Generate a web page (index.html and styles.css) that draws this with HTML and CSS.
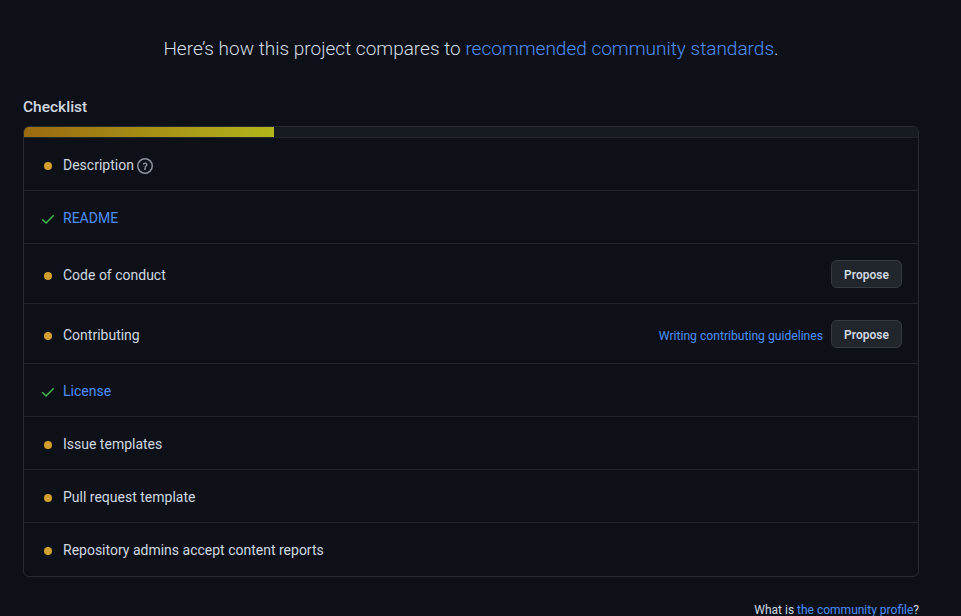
FILE: index.html
```html
<!DOCTYPE html>
<html lang="en">
<head>
<meta charset="utf-8">
<title>Community Standards</title>
<link rel="stylesheet" href="styles.css">
</head>
<body>
<main class="page">
  <h2 class="lead">Here’s how this project compares to <a href="#">recommended community standards</a>.</h2>
  <h3 class="title">Checklist</h3>
  <section class="box">
    <div class="progress"><div class="progress-fill" style="width:28%"></div></div>
    <ul class="list">
      <li class="row"><span class="dot"></span><span>Description</span>
        <svg class="help" width="16" height="16" viewBox="0 0 16 16" fill="#8b949e"><path d="M8 1.5a6.5 6.5 0 1 0 0 13 6.5 6.5 0 0 0 0-13ZM0 8a8 8 0 1 1 16 0A8 8 0 0 1 0 8Zm6.32-2.9A2.5 2.5 0 0 1 10.5 6.75c0 .8-.4 1.3-.93 1.67-.3.2-.57.38-.57.83a.75.75 0 0 1-1.5 0c0-1.1.7-1.65 1.2-2 .33-.22.3-.3.3-.5a1 1 0 0 0-1.65-.76.75.75 0 1 1-1.03-.89ZM8 12a1 1 0 1 0 0-2 1 1 0 0 0 0 2Z"/></svg>
      </li>
      <li class="row"><svg class="check" width="16" height="16" viewBox="0 0 16 16" fill="#3fb950"><path d="M13.78 4.22a.75.75 0 0 1 0 1.06l-7.25 7.25a.75.75 0 0 1-1.06 0L2.22 9.28a.75.75 0 1 1 1.06-1.06L6 10.94l6.72-6.72a.75.75 0 0 1 1.06 0Z"/></svg><a href="#">README</a></li>
      <li class="row row-action"><span class="dot"></span><span>Code of conduct</span><div class="actions"><button class="btn">Propose</button></div></li>
      <li class="row row-action"><span class="dot"></span><span>Contributing</span><div class="actions"><a class="small-link" href="#">Writing contributing guidelines</a><button class="btn">Propose</button></div></li>
      <li class="row"><svg class="check" width="16" height="16" viewBox="0 0 16 16" fill="#3fb950"><path d="M13.78 4.22a.75.75 0 0 1 0 1.06l-7.25 7.25a.75.75 0 0 1-1.06 0L2.22 9.28a.75.75 0 1 1 1.06-1.06L6 10.94l6.72-6.72a.75.75 0 0 1 1.06 0Z"/></svg><a href="#">License</a></li>
      <li class="row"><span class="dot"></span><span>Issue templates</span></li>
      <li class="row"><span class="dot"></span><span>Pull request template</span></li>
      <li class="row"><span class="dot"></span><span>Repository admins accept content reports</span></li>
    </ul>
  </section>
  <p class="foot">What is <a href="#">the community profile</a>?</p>
</main>
</body>
</html>
```
FILE: styles.css
```css
html, body { margin: 0; padding: 0; background: #0d1117; overflow: hidden; }
body { color: #d0d8e0; font-family: Roboto, "Noto Sans", sans-serif; font-size: 14px; }
a { color: #4d8ef7; text-decoration: none; }
.page { width: 896px; margin-left: 23px; }
.lead { margin: 0; padding-top: 35px; text-align: center; font-size: 19px; line-height: 27px; font-weight: 300; color: #d4dce4; }
.title { margin: 0; padding-top: 34px; font-size: 15.5px; line-height: 22px; font-weight: 500; }
.box { margin-top: 8px; height: 451px; box-sizing: border-box; border: 1px solid #262b32; border-radius: 6px; overflow: hidden; }
.progress { height: 10px; background: #161b22; }
.progress-fill { height: 100%; background: linear-gradient(90deg, #9a6a10, #b2b51b); }
.list { list-style: none; margin: 0; padding: 0; border-top: 1px solid #21262d; }
.row { display: flex; align-items: center; box-sizing: border-box; height: 53px; padding: 2px 16px 0; border-top: 1px solid #21262d; }
.row:first-child { height: 52px; border-top: 0; }
.row-action { height: 60px; }
.dot { width: 8px; height: 8px; border-radius: 50%; background: #d29f2e; margin: 2px 12px 0 4px; flex: none; }
.check { margin: 2px 7px 0 0; flex: none; }
.help { margin: 2px 0 0 3px; }
.dot + span { margin-left: -1px; }
.actions { margin-left: auto; margin-top: -2px; display: flex; align-items: center; gap: 8px; }
.small-link { font-size: 12.15px; margin-top: 4px; }
.btn { height: 28px; width: 71px; padding: 2px 0 0; border: 1px solid #363b42; border-radius: 6px; background: #21262d; color: #d0d8e0; font: 600 12px Roboto, sans-serif; }
.foot { margin: 24px 0 0; text-align: right; font-size: 12px; line-height: 18px; }
```
